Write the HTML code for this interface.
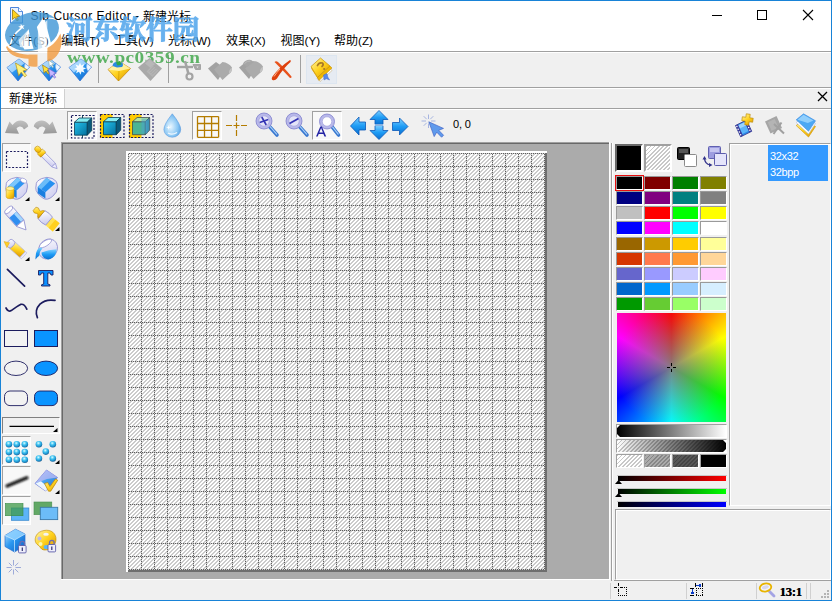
<!DOCTYPE html>
<html lang="zh"><head><meta charset="utf-8"><title>Sib Cursor Editor</title>
<style>
html,body{margin:0;padding:0;}
body{width:832px;height:601px;overflow:hidden;position:relative;background:#f0f0f0;font-family:"Liberation Sans",sans-serif;}
div,span.t,svg.a{position:absolute;box-sizing:border-box;}
span.t{white-space:nowrap;line-height:1.2;}
</style></head><body>
<div style="left:0px;top:0px;width:832px;height:601px;background:#1883d7"></div>
<div style="left:1px;top:1px;width:830px;height:599px;background:#f0f0f0"></div>
<div style="left:1px;top:1px;width:830px;height:50px;background:#fff"></div>
<div style="left:1px;top:51px;width:830px;height:1px;background:#a0a0a0"></div>
<div style="left:1px;top:52px;width:830px;height:1px;background:#fff"></div>
<span class="t" style="left:30.5px;top:9px;font-size:12px;color:#000;letter-spacing:0.55px">Sib Cursor Editor -</span>
<span class="t" style="left:33.0px;top:34px;font-size:11.7px;color:#000;">(S)</span>
<span class="t" style="left:85.0px;top:34px;font-size:11.7px;color:#000;">(T)</span>
<span class="t" style="left:138.0px;top:34px;font-size:11.7px;color:#000;">(V)</span>
<span class="t" style="left:192.0px;top:34px;font-size:11.7px;color:#000;">(W)</span>
<span class="t" style="left:250.0px;top:34px;font-size:11.7px;color:#000;">(X)</span>
<span class="t" style="left:304.5px;top:34px;font-size:11.7px;color:#000;">(Y)</span>
<span class="t" style="left:358.0px;top:34px;font-size:11.7px;color:#000;">(Z)</span>
<div style="left:1px;top:87px;width:830px;height:1px;background:#a0a0a0"></div>
<div style="left:1px;top:88px;width:830px;height:1px;background:#fff"></div>
<div style="left:1px;top:89px;width:64px;height:19px;background:#fff;border-right:1px solid #d0d0d0"></div>
<div style="left:1px;top:108px;width:830px;height:1px;background:#a0a0a0"></div>
<div style="left:1px;top:109px;width:830px;height:1px;background:#fff"></div>
<div style="left:61px;top:142px;width:548px;height:437px;background:#a0a0a0"></div>
<div style="left:62px;top:143px;width:547px;height:436px;background:#696969"></div>
<div style="left:63px;top:144px;width:546px;height:435px;background:#ababab"></div>
<div style="left:61px;top:579px;width:549px;height:1px;background:#fff"></div>
<div style="left:609px;top:142px;width:1px;height:438px;background:#fff"></div>
<div style="left:126px;top:151px;width:421px;height:421px;background:#fff"></div>
<div style="left:128px;top:153px;width:419px;height:419px;background:#6e6e6e"></div>
<div style="left:128px;top:153px;width:417px;height:417px;"><svg class="a" style="left:0;top:0" width="417" height="417" shape-rendering="crispEdges"><defs><pattern id="g" width="26" height="26" patternUnits="userSpaceOnUse"><rect width="26" height="26" fill="#fff"/><path fill="#cbcbcb" d="M3 1h1v1h-1zM4 1h1v1h-1zM7 1h1v1h-1zM8 1h1v1h-1zM11 1h1v1h-1zM12 1h1v1h-1zM15 1h1v1h-1zM16 1h1v1h-1zM19 1h1v1h-1zM20 1h1v1h-1zM23 1h1v1h-1zM24 1h1v1h-1zM2 2h1v1h-1zM3 2h1v1h-1zM6 2h1v1h-1zM7 2h1v1h-1zM10 2h1v1h-1zM11 2h1v1h-1zM14 2h1v1h-1zM15 2h1v1h-1zM18 2h1v1h-1zM19 2h1v1h-1zM22 2h1v1h-1zM23 2h1v1h-1zM1 3h1v1h-1zM2 3h1v1h-1zM5 3h1v1h-1zM6 3h1v1h-1zM9 3h1v1h-1zM10 3h1v1h-1zM14 3h1v1h-1zM17 3h1v1h-1zM18 3h1v1h-1zM21 3h1v1h-1zM22 3h1v1h-1zM25 3h1v1h-1zM1 4h1v1h-1zM4 4h1v1h-1zM5 4h1v1h-1zM8 4h1v1h-1zM9 4h1v1h-1zM12 4h1v1h-1zM16 4h1v1h-1zM17 4h1v1h-1zM20 4h1v1h-1zM21 4h1v1h-1zM24 4h1v1h-1zM25 4h1v1h-1zM3 5h1v1h-1zM4 5h1v1h-1zM7 5h1v1h-1zM8 5h1v1h-1zM11 5h1v1h-1zM12 5h1v1h-1zM15 5h1v1h-1zM16 5h1v1h-1zM19 5h1v1h-1zM20 5h1v1h-1zM23 5h1v1h-1zM24 5h1v1h-1zM2 6h1v1h-1zM3 6h1v1h-1zM6 6h1v1h-1zM7 6h1v1h-1zM10 6h1v1h-1zM11 6h1v1h-1zM14 6h1v1h-1zM15 6h1v1h-1zM18 6h1v1h-1zM19 6h1v1h-1zM22 6h1v1h-1zM23 6h1v1h-1zM1 7h1v1h-1zM2 7h1v1h-1zM5 7h1v1h-1zM6 7h1v1h-1zM9 7h1v1h-1zM10 7h1v1h-1zM14 7h1v1h-1zM17 7h1v1h-1zM18 7h1v1h-1zM21 7h1v1h-1zM22 7h1v1h-1zM25 7h1v1h-1zM1 8h1v1h-1zM4 8h1v1h-1zM5 8h1v1h-1zM8 8h1v1h-1zM9 8h1v1h-1zM12 8h1v1h-1zM16 8h1v1h-1zM17 8h1v1h-1zM20 8h1v1h-1zM21 8h1v1h-1zM24 8h1v1h-1zM25 8h1v1h-1zM3 9h1v1h-1zM4 9h1v1h-1zM7 9h1v1h-1zM8 9h1v1h-1zM11 9h1v1h-1zM12 9h1v1h-1zM15 9h1v1h-1zM16 9h1v1h-1zM19 9h1v1h-1zM20 9h1v1h-1zM23 9h1v1h-1zM24 9h1v1h-1zM2 10h1v1h-1zM3 10h1v1h-1zM6 10h1v1h-1zM7 10h1v1h-1zM10 10h1v1h-1zM11 10h1v1h-1zM14 10h1v1h-1zM15 10h1v1h-1zM18 10h1v1h-1zM19 10h1v1h-1zM22 10h1v1h-1zM23 10h1v1h-1zM1 11h1v1h-1zM2 11h1v1h-1zM5 11h1v1h-1zM6 11h1v1h-1zM9 11h1v1h-1zM10 11h1v1h-1zM14 11h1v1h-1zM17 11h1v1h-1zM18 11h1v1h-1zM21 11h1v1h-1zM22 11h1v1h-1zM25 11h1v1h-1zM1 12h1v1h-1zM4 12h1v1h-1zM5 12h1v1h-1zM8 12h1v1h-1zM9 12h1v1h-1zM12 12h1v1h-1zM16 12h1v1h-1zM17 12h1v1h-1zM20 12h1v1h-1zM21 12h1v1h-1zM24 12h1v1h-1zM25 12h1v1h-1zM2 14h1v1h-1zM3 14h1v1h-1zM6 14h1v1h-1zM7 14h1v1h-1zM10 14h1v1h-1zM11 14h1v1h-1zM14 14h1v1h-1zM15 14h1v1h-1zM18 14h1v1h-1zM19 14h1v1h-1zM22 14h1v1h-1zM23 14h1v1h-1zM1 15h1v1h-1zM2 15h1v1h-1zM5 15h1v1h-1zM6 15h1v1h-1zM9 15h1v1h-1zM10 15h1v1h-1zM14 15h1v1h-1zM17 15h1v1h-1zM18 15h1v1h-1zM21 15h1v1h-1zM22 15h1v1h-1zM25 15h1v1h-1zM1 16h1v1h-1zM4 16h1v1h-1zM5 16h1v1h-1zM8 16h1v1h-1zM9 16h1v1h-1zM12 16h1v1h-1zM16 16h1v1h-1zM17 16h1v1h-1zM20 16h1v1h-1zM21 16h1v1h-1zM24 16h1v1h-1zM25 16h1v1h-1zM3 17h1v1h-1zM4 17h1v1h-1zM7 17h1v1h-1zM8 17h1v1h-1zM11 17h1v1h-1zM12 17h1v1h-1zM15 17h1v1h-1zM16 17h1v1h-1zM19 17h1v1h-1zM20 17h1v1h-1zM23 17h1v1h-1zM24 17h1v1h-1zM2 18h1v1h-1zM3 18h1v1h-1zM6 18h1v1h-1zM7 18h1v1h-1zM10 18h1v1h-1zM11 18h1v1h-1zM14 18h1v1h-1zM15 18h1v1h-1zM18 18h1v1h-1zM19 18h1v1h-1zM22 18h1v1h-1zM23 18h1v1h-1zM1 19h1v1h-1zM2 19h1v1h-1zM5 19h1v1h-1zM6 19h1v1h-1zM9 19h1v1h-1zM10 19h1v1h-1zM14 19h1v1h-1zM17 19h1v1h-1zM18 19h1v1h-1zM21 19h1v1h-1zM22 19h1v1h-1zM25 19h1v1h-1zM1 20h1v1h-1zM4 20h1v1h-1zM5 20h1v1h-1zM8 20h1v1h-1zM9 20h1v1h-1zM12 20h1v1h-1zM16 20h1v1h-1zM17 20h1v1h-1zM20 20h1v1h-1zM21 20h1v1h-1zM24 20h1v1h-1zM25 20h1v1h-1zM3 21h1v1h-1zM4 21h1v1h-1zM7 21h1v1h-1zM8 21h1v1h-1zM11 21h1v1h-1zM12 21h1v1h-1zM15 21h1v1h-1zM16 21h1v1h-1zM19 21h1v1h-1zM20 21h1v1h-1zM23 21h1v1h-1zM24 21h1v1h-1zM2 22h1v1h-1zM3 22h1v1h-1zM6 22h1v1h-1zM7 22h1v1h-1zM10 22h1v1h-1zM11 22h1v1h-1zM14 22h1v1h-1zM15 22h1v1h-1zM18 22h1v1h-1zM19 22h1v1h-1zM22 22h1v1h-1zM23 22h1v1h-1zM1 23h1v1h-1zM2 23h1v1h-1zM5 23h1v1h-1zM6 23h1v1h-1zM9 23h1v1h-1zM10 23h1v1h-1zM14 23h1v1h-1zM17 23h1v1h-1zM18 23h1v1h-1zM21 23h1v1h-1zM22 23h1v1h-1zM25 23h1v1h-1zM1 24h1v1h-1zM4 24h1v1h-1zM5 24h1v1h-1zM8 24h1v1h-1zM9 24h1v1h-1zM12 24h1v1h-1zM16 24h1v1h-1zM17 24h1v1h-1zM20 24h1v1h-1zM21 24h1v1h-1zM24 24h1v1h-1zM25 24h1v1h-1zM3 25h1v1h-1zM4 25h1v1h-1zM7 25h1v1h-1zM8 25h1v1h-1zM11 25h1v1h-1zM12 25h1v1h-1zM15 25h1v1h-1zM16 25h1v1h-1zM19 25h1v1h-1zM20 25h1v1h-1zM23 25h1v1h-1zM24 25h1v1h-1z"/><path fill="#cfcfcf" d="M0 0h1v1h-1zM2 0h1v1h-1zM4 0h1v1h-1zM6 0h1v1h-1zM8 0h1v1h-1zM10 0h1v1h-1zM12 0h1v1h-1zM14 0h1v1h-1zM16 0h1v1h-1zM18 0h1v1h-1zM20 0h1v1h-1zM22 0h1v1h-1zM24 0h1v1h-1zM13 1h1v1h-1zM0 2h1v1h-1zM13 3h1v1h-1zM0 4h1v1h-1zM13 5h1v1h-1zM0 6h1v1h-1zM13 7h1v1h-1zM0 8h1v1h-1zM13 9h1v1h-1zM0 10h1v1h-1zM13 11h1v1h-1zM0 12h1v1h-1zM1 13h1v1h-1zM3 13h1v1h-1zM5 13h1v1h-1zM7 13h1v1h-1zM9 13h1v1h-1zM11 13h1v1h-1zM13 13h1v1h-1zM15 13h1v1h-1zM17 13h1v1h-1zM19 13h1v1h-1zM21 13h1v1h-1zM23 13h1v1h-1zM25 13h1v1h-1zM0 14h1v1h-1zM13 15h1v1h-1zM0 16h1v1h-1zM13 17h1v1h-1zM0 18h1v1h-1zM13 19h1v1h-1zM0 20h1v1h-1zM13 21h1v1h-1zM0 22h1v1h-1zM13 23h1v1h-1zM0 24h1v1h-1zM13 25h1v1h-1z"/><path fill="#5e5e5e" d="M1 0h1v1h-1zM3 0h1v1h-1zM5 0h1v1h-1zM7 0h1v1h-1zM9 0h1v1h-1zM11 0h1v1h-1zM13 0h1v1h-1zM15 0h1v1h-1zM17 0h1v1h-1zM19 0h1v1h-1zM21 0h1v1h-1zM23 0h1v1h-1zM25 0h1v1h-1zM0 1h1v1h-1zM13 2h1v1h-1zM0 3h1v1h-1zM13 4h1v1h-1zM0 5h1v1h-1zM13 6h1v1h-1zM0 7h1v1h-1zM13 8h1v1h-1zM0 9h1v1h-1zM13 10h1v1h-1zM0 11h1v1h-1zM13 12h1v1h-1zM0 13h1v1h-1zM2 13h1v1h-1zM4 13h1v1h-1zM6 13h1v1h-1zM8 13h1v1h-1zM10 13h1v1h-1zM12 13h1v1h-1zM14 13h1v1h-1zM16 13h1v1h-1zM18 13h1v1h-1zM20 13h1v1h-1zM22 13h1v1h-1zM24 13h1v1h-1zM13 14h1v1h-1zM0 15h1v1h-1zM13 16h1v1h-1zM0 17h1v1h-1zM13 18h1v1h-1zM0 19h1v1h-1zM13 20h1v1h-1zM0 21h1v1h-1zM13 22h1v1h-1zM0 23h1v1h-1zM13 24h1v1h-1zM0 25h1v1h-1z"/></pattern></defs><rect width="417" height="417" fill="url(#g)"/></svg></div>
<div style="left:611px;top:143px;width:1px;height:438px;background:#a0a0a0"></div>
<div style="left:612px;top:143px;width:1px;height:437px;background:#fff"></div>
<div style="left:615px;top:144px;width:28px;height:28px;background:#000;border:2px solid;border-color:#696969 #fff #fff #696969"></div>
<div style="left:644px;top:144px;width:28px;height:28px;background:repeating-linear-gradient(135deg,#c8c8c8 0,#c8c8c8 1.41px,#fff 1.41px,#fff 2.83px);border:2px solid;border-color:#a0a0a0 #fff #fff #a0a0a0"></div>
<div style="left:616px;top:176px;width:27px;height:14px;background:#000000;border:1px solid;border-color:#9a9a9a #fff #fff #9a9a9a"></div>
<div style="left:644px;top:176px;width:27px;height:14px;background:#800000;border:1px solid;border-color:#9a9a9a #fff #fff #9a9a9a"></div>
<div style="left:672px;top:176px;width:27px;height:14px;background:#008000;border:1px solid;border-color:#9a9a9a #fff #fff #9a9a9a"></div>
<div style="left:700px;top:176px;width:27px;height:14px;background:#808000;border:1px solid;border-color:#9a9a9a #fff #fff #9a9a9a"></div>
<div style="left:616px;top:191px;width:27px;height:14px;background:#000080;border:1px solid;border-color:#9a9a9a #fff #fff #9a9a9a"></div>
<div style="left:644px;top:191px;width:27px;height:14px;background:#800080;border:1px solid;border-color:#9a9a9a #fff #fff #9a9a9a"></div>
<div style="left:672px;top:191px;width:27px;height:14px;background:#008080;border:1px solid;border-color:#9a9a9a #fff #fff #9a9a9a"></div>
<div style="left:700px;top:191px;width:27px;height:14px;background:#808080;border:1px solid;border-color:#9a9a9a #fff #fff #9a9a9a"></div>
<div style="left:616px;top:206px;width:27px;height:14px;background:#c0c0c0;border:1px solid;border-color:#9a9a9a #fff #fff #9a9a9a"></div>
<div style="left:644px;top:206px;width:27px;height:14px;background:#ff0000;border:1px solid;border-color:#9a9a9a #fff #fff #9a9a9a"></div>
<div style="left:672px;top:206px;width:27px;height:14px;background:#00ff00;border:1px solid;border-color:#9a9a9a #fff #fff #9a9a9a"></div>
<div style="left:700px;top:206px;width:27px;height:14px;background:#ffff00;border:1px solid;border-color:#9a9a9a #fff #fff #9a9a9a"></div>
<div style="left:616px;top:221px;width:27px;height:14px;background:#0000ff;border:1px solid;border-color:#9a9a9a #fff #fff #9a9a9a"></div>
<div style="left:644px;top:221px;width:27px;height:14px;background:#ff00ff;border:1px solid;border-color:#9a9a9a #fff #fff #9a9a9a"></div>
<div style="left:672px;top:221px;width:27px;height:14px;background:#00ffff;border:1px solid;border-color:#9a9a9a #fff #fff #9a9a9a"></div>
<div style="left:700px;top:221px;width:27px;height:14px;background:#ffffff;border:1px solid;border-color:#9a9a9a #fff #fff #9a9a9a"></div>
<div style="left:616px;top:237px;width:27px;height:14px;background:#996600;border:1px solid;border-color:#9a9a9a #fff #fff #9a9a9a"></div>
<div style="left:644px;top:237px;width:27px;height:14px;background:#cc9900;border:1px solid;border-color:#9a9a9a #fff #fff #9a9a9a"></div>
<div style="left:672px;top:237px;width:27px;height:14px;background:#ffcc00;border:1px solid;border-color:#9a9a9a #fff #fff #9a9a9a"></div>
<div style="left:700px;top:237px;width:27px;height:14px;background:#ffff99;border:1px solid;border-color:#9a9a9a #fff #fff #9a9a9a"></div>
<div style="left:616px;top:252px;width:27px;height:14px;background:#d63600;border:1px solid;border-color:#9a9a9a #fff #fff #9a9a9a"></div>
<div style="left:644px;top:252px;width:27px;height:14px;background:#ff794d;border:1px solid;border-color:#9a9a9a #fff #fff #9a9a9a"></div>
<div style="left:672px;top:252px;width:27px;height:14px;background:#ff9933;border:1px solid;border-color:#9a9a9a #fff #fff #9a9a9a"></div>
<div style="left:700px;top:252px;width:27px;height:14px;background:#ffd699;border:1px solid;border-color:#9a9a9a #fff #fff #9a9a9a"></div>
<div style="left:616px;top:267px;width:27px;height:14px;background:#6666cc;border:1px solid;border-color:#9a9a9a #fff #fff #9a9a9a"></div>
<div style="left:644px;top:267px;width:27px;height:14px;background:#9999ff;border:1px solid;border-color:#9a9a9a #fff #fff #9a9a9a"></div>
<div style="left:672px;top:267px;width:27px;height:14px;background:#ccccff;border:1px solid;border-color:#9a9a9a #fff #fff #9a9a9a"></div>
<div style="left:700px;top:267px;width:27px;height:14px;background:#ffccff;border:1px solid;border-color:#9a9a9a #fff #fff #9a9a9a"></div>
<div style="left:616px;top:282px;width:27px;height:14px;background:#0066cc;border:1px solid;border-color:#9a9a9a #fff #fff #9a9a9a"></div>
<div style="left:644px;top:282px;width:27px;height:14px;background:#0099ff;border:1px solid;border-color:#9a9a9a #fff #fff #9a9a9a"></div>
<div style="left:672px;top:282px;width:27px;height:14px;background:#99ccff;border:1px solid;border-color:#9a9a9a #fff #fff #9a9a9a"></div>
<div style="left:700px;top:282px;width:27px;height:14px;background:#d6eeff;border:1px solid;border-color:#9a9a9a #fff #fff #9a9a9a"></div>
<div style="left:616px;top:297px;width:27px;height:14px;background:#009900;border:1px solid;border-color:#9a9a9a #fff #fff #9a9a9a"></div>
<div style="left:644px;top:297px;width:27px;height:14px;background:#66cc33;border:1px solid;border-color:#9a9a9a #fff #fff #9a9a9a"></div>
<div style="left:672px;top:297px;width:27px;height:14px;background:#99ff66;border:1px solid;border-color:#9a9a9a #fff #fff #9a9a9a"></div>
<div style="left:700px;top:297px;width:27px;height:14px;background:#ccffcc;border:1px solid;border-color:#9a9a9a #fff #fff #9a9a9a"></div>
<div style="left:615px;top:175px;width:29px;height:16px;border:1px solid #e81010"></div>
<div style="left:617px;top:313px;width:109px;height:109px;background:radial-gradient(circle at 54.5px 54.5px,rgba(128,128,128,.96) 0,rgba(128,128,128,0) 58px),conic-gradient(from 0deg at 54.5px 54.5px,#f00,#ff0 60deg,#0f0 120deg,#0ff 180deg,#00f 240deg,#f0f 300deg,#f00)"></div>
<div style="left:616px;top:424px;width:111px;height:14px;background:linear-gradient(90deg,#000,#fff);border:1px solid;border-color:#a0a0a0 #fff #fff #a0a0a0"></div>
<div style="left:616px;top:439px;width:111px;height:14px;background:linear-gradient(90deg,rgba(0,0,0,0),#000),repeating-linear-gradient(135deg,#c8c8c8 0,#c8c8c8 1.41px,#fff 1.41px,#fff 2.83px);border:1px solid;border-color:#a0a0a0 #fff #fff #a0a0a0"></div>
<div style="left:616px;top:454px;width:27px;height:14px;background:linear-gradient(rgba(0,0,0,0),rgba(0,0,0,0)),repeating-linear-gradient(135deg,#c8c8c8 0,#c8c8c8 1.41px,#fff 1.41px,#fff 2.83px);border:1px solid;border-color:#a0a0a0 #fff #fff #a0a0a0"></div>
<div style="left:644px;top:454px;width:27px;height:14px;background:linear-gradient(rgba(0,0,0,0.33),rgba(0,0,0,0.33)),repeating-linear-gradient(135deg,#c8c8c8 0,#c8c8c8 1.41px,#fff 1.41px,#fff 2.83px);border:1px solid;border-color:#a0a0a0 #fff #fff #a0a0a0"></div>
<div style="left:672px;top:454px;width:27px;height:14px;background:linear-gradient(rgba(0,0,0,0.66),rgba(0,0,0,0.66)),repeating-linear-gradient(135deg,#c8c8c8 0,#c8c8c8 1.41px,#fff 1.41px,#fff 2.83px);border:1px solid;border-color:#a0a0a0 #fff #fff #a0a0a0"></div>
<div style="left:700px;top:454px;width:27px;height:14px;background:linear-gradient(rgba(0,0,0,1),rgba(0,0,0,1)),repeating-linear-gradient(135deg,#c8c8c8 0,#c8c8c8 1.41px,#fff 1.41px,#fff 2.83px);border:1px solid;border-color:#a0a0a0 #fff #fff #a0a0a0"></div>
<div style="left:618px;top:476px;width:108px;height:5px;background:linear-gradient(90deg,#000,#f00)"></div>
<div style="left:617px;top:475px;width:110px;height:1px;background:#c8c8c8"></div>
<div style="left:618px;top:489px;width:108px;height:5px;background:linear-gradient(90deg,#000,#0f0)"></div>
<div style="left:617px;top:488px;width:110px;height:1px;background:#c8c8c8"></div>
<div style="left:618px;top:502px;width:108px;height:5px;background:linear-gradient(90deg,#000,#00f)"></div>
<div style="left:617px;top:501px;width:110px;height:1px;background:#c8c8c8"></div>
<div style="left:729px;top:143px;width:102px;height:363px;background:#f0f0f0;border:1px solid;border-color:#a0a0a0 #fff #fff #a0a0a0"></div>
<div style="left:730px;top:144px;width:1px;height:361px;background:#fff"></div>
<div style="left:730px;top:144px;width:100px;height:1px;background:#fff"></div>
<div style="left:768px;top:145px;width:60px;height:36px;background:#3399ff"></div>
<span class="t" style="left:770px;top:150px;font-size:11px;color:#fff;letter-spacing:-0.35px">32x32</span>
<span class="t" style="left:770px;top:166px;font-size:11px;color:#fff;letter-spacing:-0.35px">32bpp</span>
<div style="left:615px;top:509px;width:216px;height:71px;background:#f0f0f0;border:1px solid;border-color:#a0a0a0 #fff #fff #a0a0a0"></div>
<div style="left:616px;top:510px;width:214px;height:69px;border:1px solid;border-color:#fff #f0f0f0 #f0f0f0 #fff"></div>
<div style="left:614px;top:580px;width:217px;height:1px;background:#a0a0a0"></div>
<div style="left:610px;top:583px;width:1px;height:16px;background:#d0d0d0"></div>
<div style="left:686px;top:583px;width:1px;height:16px;background:#d0d0d0"></div>
<div style="left:756px;top:583px;width:1px;height:16px;background:#d0d0d0"></div>
<div style="left:806px;top:583px;width:1px;height:16px;background:#d0d0d0"></div>
<div style="left:810px;top:583px;width:1px;height:16px;background:#d0d0d0"></div>
<span class="t" style="left:779.5px;top:584.6px;font-size:12.5px;font-weight:bold;font-family:'Liberation Serif',serif;letter-spacing:-.15px;text-shadow:.4px 0 0 #000">13:1</span>
<div style="left:827px;top:590px;width:2px;height:2px;background:#b4b4b4"></div>
<div style="left:824px;top:593px;width:2px;height:2px;background:#b4b4b4"></div>
<div style="left:827px;top:593px;width:2px;height:2px;background:#b4b4b4"></div>
<div style="left:821px;top:596px;width:2px;height:2px;background:#b4b4b4"></div>
<div style="left:824px;top:596px;width:2px;height:2px;background:#b4b4b4"></div>
<div style="left:827px;top:596px;width:2px;height:2px;background:#b4b4b4"></div>
<div style="left:98px;top:55px;width:1px;height:28px;background:#a0a0a0"></div>
<div style="left:168px;top:55px;width:1px;height:28px;background:#a0a0a0"></div>
<div style="left:300px;top:55px;width:1px;height:28px;background:#a0a0a0"></div>
<div style="left:306px;top:55px;width:31px;height:29px;background:#e6ebf2;border:1px solid #dde6f0"></div>
<div style="left:67px;top:111px;width:30px;height:29px;background:#f8f8f8;border:1px solid;border-color:#a0a0a0 #fff #fff #a0a0a0"></div>
<div style="left:192px;top:111px;width:30px;height:29px;background:#f8f8f8;border:1px solid;border-color:#a0a0a0 #fff #fff #a0a0a0"></div>
<div style="left:312px;top:111px;width:30px;height:29px;background:#f8f8f8;border:1px solid;border-color:#a0a0a0 #fff #fff #a0a0a0"></div>
<span class="t" style="left:453px;top:118px;font-size:11px;color:#000;letter-spacing:-.2px">0, 0</span>
<div style="left:2px;top:143px;width:29px;height:29px;background:#f8f8f8;border:1px solid;border-color:#a0a0a0 #fff #fff #a0a0a0"></div>
<div style="left:2px;top:417px;width:58px;height:17px;background:#f0f0f0;border:1px solid;border-color:#808080 #fff #fff #808080"></div>
<div style="left:2px;top:436px;width:29px;height:29px;background:#f8f8f8;border:1px solid;border-color:#a0a0a0 #fff #fff #a0a0a0"></div>
<div style="left:2px;top:466px;width:29px;height:29px;background:#f8f8f8;border:1px solid;border-color:#a0a0a0 #fff #fff #a0a0a0"></div>
<div style="left:2px;top:496px;width:29px;height:29px;background:#f8f8f8;border:1px solid;border-color:#a0a0a0 #fff #fff #a0a0a0"></div>
<span class="t" style="left:67px;top:48.3px;font-size:16.5px;font-weight:bold;font-family:'Liberation Serif',serif;color:#3fa648;opacity:.82;letter-spacing:.4px;transform-origin:0 0;transform:scaleX(1.168)">www.pc0359.cn</span>
<svg class="a" style="left:0;top:0" width="832" height="601" viewBox="0 0 832 601">
<path d="M10.5 7.5h8l4 4v11.5h-12z" fill="#eaf4ff" stroke="#3a78d8" stroke-width=".9"/><path d="M18.5 7.5v4h4" fill="#fff" stroke="#3a78d8" stroke-width=".8"/><path d="M12.500 9.500v10l2.600-2.200 1.800 3.600 1.600-.8-1.800-3.500 3.300-.2z" fill="#ffd21e" stroke="#8a6a00" stroke-width=".7"/>
<text x="143" y="20.900" font-size="12" fill="#000" font-family="'Liberation Sans','Noto Sans CJK SC',sans-serif">新建光标</text>
<path d="M712 15.5h10" stroke="#000" fill="none"/>
<rect x="757.5" y="10.5" width="9" height="9" stroke="#000" fill="none"/>
<path d="M803 10l10 10M813 10l-10 10" stroke="#000" stroke-width="1.1" fill="none"/>
<text x="9" y="45.400" font-size="12" fill="#000" font-family="'Liberation Sans','Noto Sans CJK SC',sans-serif">文件</text>
<text x="61" y="45.400" font-size="12" fill="#000" font-family="'Liberation Sans','Noto Sans CJK SC',sans-serif">编辑</text>
<text x="114" y="45.400" font-size="12" fill="#000" font-family="'Liberation Sans','Noto Sans CJK SC',sans-serif">工具</text>
<text x="168" y="45.400" font-size="12" fill="#000" font-family="'Liberation Sans','Noto Sans CJK SC',sans-serif">光标</text>
<text x="226" y="45.400" font-size="12" fill="#000" font-family="'Liberation Sans','Noto Sans CJK SC',sans-serif">效果</text>
<text x="280.500" y="45.400" font-size="12" fill="#000" font-family="'Liberation Sans','Noto Sans CJK SC',sans-serif">视图</text>
<text x="334" y="45.400" font-size="12" fill="#000" font-family="'Liberation Sans','Noto Sans CJK SC',sans-serif">帮助</text>
<text x="9" y="103.400" font-size="12" fill="#000" font-family="'Liberation Sans','Noto Sans CJK SC',sans-serif">新建光标</text>
<path d="M818 92l9 9M827 92l-9 9" stroke="#000" stroke-width="1.3" fill="none"/>
<rect x="677.5" y="147.5" width="12" height="12" rx="1" fill="#222" stroke="#000"/><path d="M679 149h9v4h-9z" fill="#555"/><rect x="684.5" y="154.5" width="12" height="12" rx="1" fill="#fff" stroke="#8a8a8a"/>
<rect x="708.5" y="146.5" width="12" height="12" rx="1" fill="#9c9ce0" stroke="#6060b0"/><path d="M710 148h9v4h-9z" fill="#c4c4f0"/><rect x="714.5" y="153.5" width="12" height="12" rx="1" fill="#e4e4fa" stroke="#5c5cac"/><path d="M704.5 158q0 6 6 7" fill="none" stroke="#34348c" stroke-width="1.2"/><path d="M702.5 159.5l2-3.5 2 3.5zM709 163l3.5 2-3.5 2z" fill="#34348c"/>
<path d="M671.5 363v3M671.5 369v3M667 367.5h3M673 367.5h3" stroke="#000" fill="none"/>
<path d="M617 425h3l-3 3zM617 437h3l-3-3z" fill="#fff"/>
<path d="M726 440h-3l3 3zM726 452h-3l3-3z" fill="#fff"/>
<path d="M615 484l3.5-4 3.5 4z" fill="#000"/>
<path d="M615 497l3.5-4 3.5 4z" fill="#000"/>
<path shape-rendering="crispEdges" fill="#000" d="M614 587h3v1h-3zM620 587h3v1h-3zM624 587h1v1h-1zM626 587h1v1h-1zM618 583h1v3h-1zM618 589h1v3h-1zM618 593h1v1h-1zM618 595h1v1h-1zM626 589h1v1h-1zM626 591h1v1h-1zM626 593h1v1h-1zM626 595h1v1h-1zM620 595h1v1h-1zM622 595h1v1h-1zM624 595h1v1h-1z"/>
<path shape-rendering="crispEdges" fill="#999" d="M618 587h1v1h-1z"/>
<path shape-rendering="crispEdges" fill="#000" d="M696 588h1v1h-1zM698 588h1v1h-1zM700 588h1v1h-1zM702 588h1v1h-1zM696 595h1v1h-1zM698 595h1v1h-1zM700 595h1v1h-1zM702 595h1v1h-1zM696 590h1v1h-1zM696 592h1v1h-1zM696 594h1v1h-1zM702 590h1v1h-1zM702 592h1v1h-1zM702 594h1v1h-1zM695 583h1v4h-1zM702 583h1v4h-1zM690 588h4v1h-4zM690 595h4v1h-4z"/>
<path shape-rendering="crispEdges" fill="#0a3cc8" d="M696 585h5v1h-5zM699 584h1v3h-1zM700 584h1v3h-1zM692 589h1v5h-1zM691 592h3v1h-3zM691 593h3v1h-3z"/>
<path d="M769.5 591.5l4.5 4.5" stroke="#a4a4e4" stroke-width="2.8" stroke-linecap="round"/><ellipse cx="765.5" cy="587.5" rx="5.8" ry="4" fill="#f4f4f8" stroke="#e8b400" stroke-width="1.8" transform="rotate(-12 765.5 587.5)"/><ellipse cx="765.5" cy="587.2" rx="3.5" ry="1.8" fill="#d8d8ec" transform="rotate(-12 765.5 587.5)"/>
<g transform="translate(6,58)"><path d="M1 9.5L13 1 23.5 9 12 23z" fill="url(#gb2)" stroke="#2a6ad0" stroke-width=".7"/><path d="M1 9.5L13 1 18.5 5.2 6 14.5z" fill="#bfe2ff" opacity=".75"/><path d="M19 5.5l4.5 3.5-3.5 4.2q-2.5-3.5-1-7.7z" fill="#eef6ff" stroke="#7aa8e8" stroke-width=".5"/><path transform="translate(9.5,5) rotate(-14) scale(1.25)" d="M0 0l0 10.5 2.6-2.2 1.9 4.3 1.7-.8-1.9-4.2 3.4-.1z" fill="#fff27a" stroke="#b08c10" stroke-width="0.48"/></g>
<g transform="translate(37,58)"><path d="M1 9.5L13 1 23.5 9 12 23z" fill="url(#gb2)" stroke="#2a6ad0" stroke-width=".7"/><path d="M1 9.5L13 1 18.5 5.2 6 14.5z" fill="#bfe2ff" opacity=".75"/><path d="M19 5.5l4.5 3.5-3.5 4.2q-2.5-3.5-1-7.7z" fill="#eef6ff" stroke="#7aa8e8" stroke-width=".5"/><path transform="translate(5.5,7) rotate(-12) scale(0.8)" d="M0 0l0 10.5 2.6-2.2 1.9 4.3 1.7-.8-1.9-4.2 3.4-.1z" fill="#ffe03c" stroke="#a07800" stroke-width="0.75"/><path transform="translate(11.5,2) rotate(-8) scale(0.65)" d="M0 0l0 10.5 2.6-2.2 1.9 4.3 1.7-.8-1.9-4.2 3.4-.1z" fill="#fff" stroke="#8aa" stroke-width="0.92"/><path transform="translate(11.5,10.5) rotate(-12) scale(0.85)" d="M0 0l0 10.5 2.6-2.2 1.9 4.3 1.7-.8-1.9-4.2 3.4-.1z" fill="#c8b8ff" stroke="#7a6ad0" stroke-width="0.71"/></g>
<g transform="translate(68,58)"><path d="M1 9.5L13 1 23.5 9 12 23z" fill="url(#gb2)" stroke="#2a6ad0" stroke-width=".7"/><path d="M1 9.5L13 1 18.5 5.2 6 14.5z" fill="#bfe2ff" opacity=".75"/><path d="M19 5.5l4.5 3.5-3.5 4.2q-2.5-3.5-1-7.7z" fill="#eef6ff" stroke="#7aa8e8" stroke-width=".5"/><path d="M12 4.5l1.2 3 3-1.5-1.2 3.2 3.2 1-3 1.5 1.5 3-3.2-1.2-1 3.2-1.5-3-3 1.5 1.2-3.2-3.2-1 3-1.5-1.5-3 3.2 1.2z" fill="#fff" opacity=".95"/></g>
<g transform="translate(107,58)"><path d="M1 11.5L12.5 3.5 23.5 10.5 11.5 23z" fill="url(#gy)" stroke="#c08000" stroke-width=".7"/><path d="M1 11.5L12.5 3.5 23.5 10.5 12 13z" fill="#fff6b8" opacity=".8"/><path d="M12 13l-.5 10" stroke="#c89000" stroke-width=".6"/><path d="M5.5 8q.5-4.5 5-4l4.5 .5q2 2.5 0 4.5l-5 .5z" fill="#2a8ae0"/><path d="M9 4.5l4-1.5 1.5 3.5-4 1z" fill="#30a848"/></g>
<g transform="translate(137,57)"><path d="M1 10.5L12.5 1 25 11.5 13.5 24z" fill="#a9a9a9"/><path d="M8 6.5l4.5-4 5.5 4.5-4.5 4z" fill="#b8b8b8"/><path d="M9.5 14.5l6-6 6 5-6 6.5z" fill="#b4b4b4"/><path d="M12 14.5l5-5M13.5 16l5-5M15 17.5l5-5" stroke="#a0a0a0" stroke-width=".7"/></g>
<g transform="translate(177,59)" fill="none" stroke="#a4a4a4"><path d="M0 8h16" stroke-width="2.4"/><path d="M16 5.5h7.5v5h-5z" fill="#a8a8a8" stroke-width="1"/><path d="M19.5 7.5l1 1.5 1-1.5z" fill="#f0f0f0" stroke="none"/><path d="M8 2l3.5 13" stroke-width="2.6"/><circle cx="12.5" cy="17.5" r="3" stroke-width="2.2"/></g>
<g transform="translate(208,59)"><path d="M0 9.5L8 3l9 6.5L10 21z" fill="#a2a2a2"/><path d="M6 10.5L14.5 3q6 .5 9.5 5.5 0 5-3 6.5l-6.5 6z" fill="#ababab"/><path d="M21 14.5q-.5-3.5 3-6 0 5-3 6z" fill="#c4c4c4"/></g>
<g transform="translate(239,58)"><path d="M0 9.5L8 3l9 6.5L10 21z" fill="#a2a2a2"/><path d="M6 10.5L14.5 3q6 .5 9.5 5.5 0 5-3 6.5l-6.5 6z" fill="#ababab"/><path d="M21 14.5q-.5-3.5 3-6 0 5-3 6z" fill="#c4c4c4"/><path d="M4 5.5q3-4.5 8-3.5l3 2-7 5z" fill="#a6a6a6"/><path d="M5.5 5.5q2.5-3 6-2.5" stroke="#c0c0c0" stroke-width=".8" fill="none"/></g>
<g transform="translate(271,59)"><path d="M3.5 3q1.5-1.5 3.5 0 6 5.5 13.5 14.5 .5 1.5-1.5 1.5-7.5-8-15.5-16z" fill="#e8521c"/><path d="M19 1q1.5 .5 .5 2-7.5 6.5-13.5 16.5-2 2.5-4.5 1.5-1.5-1 0-3.5 6.5-9 17.5-16.5z" fill="#de400c"/><path d="M3 17.5q3-4.500 6-7.500" stroke="#ffb488" stroke-width="1" fill="none"/></g>
<g transform="translate(310,57)"><path d="M7 21.5L19.5 11l2.5 2.5L10 24.5z" fill="#fff" stroke="#c0a060" stroke-width=".5"/><path d="M1 9.5L10.5 1 20 9 7.5 20.5z" fill="url(#gy)" stroke="#c89000" stroke-width=".7"/><path d="M1 9.5l6.5 11L9 23.5 1.5 12z" fill="#e0a000"/><path d="M7.5 20.5L20 9l2 2L9 23.5z" fill="#f0b800" stroke="#c08800" stroke-width=".5"/><path d="M7.5 8.5q1.5-3.5 5-2.5 1.5 1.5-.5 3.5" fill="none" stroke="#a87828" stroke-width="1.7" stroke-linecap="round"/><circle cx="14.2" cy="12" r="1.1" fill="#a87828"/><path d="M13.5 18l3.5-1.5 .8 3.5 1.8 3-3.2-1.2-2.400 1.2z" fill="#5a8ae8" stroke="#3a5ac8" stroke-width=".4"/></g>
<path transform="translate(5,120)" d="M0 13L4.5 1.5 7.5 5Q13-1.5 19.5 1.5 23 3.5 23.2 6.5L19 9.5Q17.5 6 14.5 6.5 12.5 7 11.5 8.5L14 13.8z" fill="url(#gg)"/>
<path transform="translate(57,120) scale(-1,1)" d="M0 13L4.5 1.5 7.5 5Q13-1.5 19.5 1.5 23 3.5 23.2 6.5L19 9.5Q17.5 6 14.5 6.5 12.5 7 11.5 8.5L14 13.8z" fill="url(#gg)"/>
<rect x="71.5" y="115.5" width="22.5" height="22.5" fill="none" stroke="#1c1c5e" stroke-width="1.2" stroke-dasharray="2 1.5"/>
<path d="M82.5 115v3M82.5 135v3" stroke="#083c54" stroke-width=".9"/>
<g transform="translate(74.5,118)" opacity="1" stroke="#083c54" stroke-width=".8" stroke-linejoin="round"><path d="M0 4.2h12.8v13h-12.8z" fill="url(#gcube)"/><path d="M0 4.2l4.6-4.2h12.6l-4.400 4.2z" fill="#86ecf2"/><path d="M12.8 4.2l4.400-4.2v12.6l-4.400 4.6z" fill="#0a5a7c"/></g>
<rect x="100" y="114" width="12.5" height="24" fill="#ffcc00"/>
<rect x="100.5" y="114.5" width="23.5" height="23" fill="none" stroke="#1c1c5e" stroke-width="1.2" stroke-dasharray="2 1.5"/>
<g transform="translate(103.5,117.5)" opacity="1" stroke="#083c54" stroke-width=".8" stroke-linejoin="round"><path d="M0 4.2h12.8v13h-12.8z" fill="url(#gcube)"/><path d="M0 4.2l4.6-4.2h12.6l-4.400 4.2z" fill="#86ecf2"/><path d="M12.8 4.2l4.400-4.2v12.6l-4.400 4.6z" fill="#0a5a7c"/></g>
<rect x="129" y="114" width="12.5" height="24" fill="#ffcc00"/>
<rect x="129.5" y="114.5" width="23.5" height="23" fill="none" stroke="#1c1c5e" stroke-width="1.2" stroke-dasharray="2 1.5"/>
<g transform="translate(132.5,117.5)" opacity="1" stroke="#3c4c54" stroke-width=".8" stroke-linejoin="round"><path d="M0 4.2h12.8v13h-12.8z" fill="#4cb494"/><path d="M0 4.2l4.6-4.2h12.6l-4.400 4.2z" fill="#b4e49c"/><path d="M12.8 4.2l4.400-4.2v12.6l-4.400 4.6z" fill="#3c94b4"/></g>
<path d="M141.5 118.5h6v15h-6z" fill="#48a4cc" opacity=".55"/>
<path d="M172.300 113.800q8.400 10.5 8.400 15.700a8.400 7.700 0 0 1-16.800 0q0-5.2 8.400-15.700z" fill="url(#gdrop)" stroke="#5c9ce0" stroke-width=".6"/><path d="M166 127.5l2-.5 .5-2 .5 2 2 .5-2 .5-.5 2-.5-2z" fill="#fff"/><path d="M168 133q4 2.5 9-.5" stroke="#f0f8ff" stroke-width="1.2" fill="none"/>
<g stroke="#b47c00" stroke-width="1.3" fill="none"><path d="M197.5 116.600v20.700M204.5 116.600v20.700M211.600 116.600v20.700M218.600 116.600v20.700M197.5 116.600h21.100M197.5 123.5h21.100M197.5 130.400h21.100M197.5 137.300h21.100"/></g>
<g stroke="#b47c00" stroke-width="1.2" fill="none"><path d="M226 125.5h6M233.5 125.5h6M241 125.5h6M236.5 115v6M236.5 122.5v6M236.5 130v6"/></g>
<path d="M269.0 126.0L277 135" stroke="#3a78d0" stroke-width="3.6" stroke-linecap="round"/><path d="M269.0 125.4L276.7 134.1" stroke="#a8d0f8" stroke-width="1.1" stroke-linecap="round"/><circle cx="264" cy="121" r="8" fill="#b8b8ea" stroke="#8080cc" stroke-width=".8"/><circle cx="264" cy="121" r="5.2" fill="#e4e4f8" stroke="#9c9cd8" stroke-width=".6"/><path d="M260.5 118l7 6M267.5 118l-7 6" stroke="#3434b4" stroke-width="1.6" transform="rotate(20 264 121)"/>
<path d="M299.0 126.0L307 135" stroke="#3a78d0" stroke-width="3.6" stroke-linecap="round"/><path d="M299.0 125.4L306.7 134.1" stroke="#a8d0f8" stroke-width="1.1" stroke-linecap="round"/><circle cx="294" cy="121" r="8" fill="#b8b8ea" stroke="#8080cc" stroke-width=".8"/><circle cx="294" cy="121" r="5.2" fill="#e4e4f8" stroke="#9c9cd8" stroke-width=".6"/><path d="M289.5 123.5l9-5" stroke="#3434b4" stroke-width="1.8"/>
<path d="M331.6 126.2L338.5 135" stroke="#3a78d0" stroke-width="3.6" stroke-linecap="round"/><path d="M331.6 125.6L338.2 134.1" stroke="#a8d0f8" stroke-width="1.1" stroke-linecap="round"/><circle cx="327" cy="121.5" r="7.5" fill="#b8b8ea" stroke="#8080cc" stroke-width=".8"/><circle cx="327" cy="121.5" r="4.7" fill="#fff" stroke="#9c9cd8" stroke-width=".6"/>
<path d="M316 136.500l4.300-10h1.600l4.300 10h-1.800l-1-2.600h-4.700l-1 2.600zM319.300 132.500h3.600l-1.800-4.500z" fill="#2424a4"/>
<path d="M350.5 126l8.5-9v5h6.5v8h-6.5v5z" fill="url(#gb)" stroke="#0a58b8" stroke-width=".8" stroke-linejoin="round"/>
<path d="M379 110.5l9 9h-5v5h-8v-5h-5z" fill="url(#gb)" stroke="#0a58b8" stroke-width=".8" stroke-linejoin="round"/>
<path d="M379 139.5l9-9h-5v-5h-8v5h-5z" fill="url(#gb)" stroke="#0a58b8" stroke-width=".8" stroke-linejoin="round"/>
<path d="M374 125h10" stroke="#e8f4ff" stroke-width="1"/>
<path d="M408 126.5l-8.5-8.5v4.5h-7v8h7v4.5z" fill="url(#gb)" stroke="#0a58b8" stroke-width=".8" stroke-linejoin="round"/>
<g stroke="#93a4dc" stroke-width=".8"><path d="M428.5 114.5v4.5M428.5 123.5v4.5M421.5 121h4.5M431 121h4.5M423.7 116.2l3 3M433.3 116.2l-3 3M423.7 125.8l3-3"/></g>
<path transform="translate(428.8,121.8) rotate(-20) scale(1.5)" d="M0 0l0 10.5 2.6-2.2 1.9 4.3 1.7-.8-1.9-4.2 3.4-.1z" fill="#5f9aec" stroke="#4060c4" stroke-width="0.40"/>
<g transform="translate(735,114)"><path d="M.5 11.5l11-5.5 5.2 11.3-11 5.5z" fill="#2a8ae8" stroke="#34348c" stroke-width=".8"/><path d="M3.3 11.3l7.2-3.6 4 8.8-7.2 3.6z" fill="#5cb4fa"/><path d="M3.3 11.3l7.2-3.6 1.5 3.3-7.2 3.6z" fill="#9cd4fd"/><path d="M.5 11.5l2.3-1.150 5.2 11.3-2.3 1.150zM9.2 7.150l2.3-1.150 5.2 11.3-2.3 1.150z" fill="#3c3c9c"/><circle cx="1.90" cy="12.60" r=".75" fill="#fff"/><circle cx="11.10" cy="8.00" r=".75" fill="#fff"/><circle cx="3.15" cy="15.35" r=".75" fill="#fff"/><circle cx="12.35" cy="10.75" r=".75" fill="#fff"/><circle cx="4.40" cy="18.10" r=".75" fill="#fff"/><circle cx="13.60" cy="13.50" r=".75" fill="#fff"/><circle cx="5.65" cy="20.85" r=".75" fill="#fff"/><circle cx="14.85" cy="16.25" r=".75" fill="#fff"/><path d="M10.5 0h4v3.5h3.5v4h-3.5v3.5h-4v-3.5h-3.5v-4h3.5z" fill="url(#gy)" stroke="#b88400" stroke-width=".6" transform="rotate(8 12.5 5.5)"/></g>
<g transform="translate(764,115)"><path d="M1 6.5L12.5 1l5.5 12-11.5 5.5z" fill="#a6a6a6"/><path d="M3.8 7.3l6.8-3.3 3.8 8.400-6.8 3.3z" fill="#b4b4b4"/><path d="M10 9l10 9.5M17.5 7.5l-8 11.5" stroke="#a0a0a0" stroke-width="2"/></g>
<g transform="translate(795,113)"><path d="M1.2 12.5L8.5 6.5 20.5 13.5 13.5 24z" fill="url(#gy)" stroke="#d09000" stroke-width=".6"/><path d="M1.2 9.5L8.5 3.5 20.5 10.5 13.5 21z" fill="#fff" stroke="#a8b8e0" stroke-width=".6"/><path d="M1.2 6.8L8.5 .8 20.5 7.8 13.5 18.3z" fill="#4ca8f4" stroke="#3a8ae0" stroke-width=".6"/><path d="M2.5 6.8L8.5 1.8 18.5 7.6 12.8 10z" fill="#a8dcff" opacity=".75"/></g>
<defs>
<linearGradient id="gb" x1="0" y1="0" x2="0" y2="1"><stop offset="0" stop-color="#7fd0ff"/><stop offset=".5" stop-color="#1e9cf5"/><stop offset="1" stop-color="#0a6fd0"/></linearGradient>
<linearGradient id="gb2" x1="0" y1="0" x2="1" y2="1"><stop offset="0" stop-color="#bfe4ff"/><stop offset=".45" stop-color="#2c98f0"/><stop offset="1" stop-color="#0a5cc4"/></linearGradient>
<linearGradient id="gy" x1="0" y1="0" x2="1" y2="1"><stop offset="0" stop-color="#fff6b0"/><stop offset=".5" stop-color="#ffd21e"/><stop offset="1" stop-color="#d89400"/></linearGradient>
<linearGradient id="gw" x1="0" y1="0" x2="1" y2="1"><stop offset="0" stop-color="#ffffff"/><stop offset="1" stop-color="#c8c8ee"/></linearGradient>
<linearGradient id="gg" x1="0" y1="0" x2="0" y2="1"><stop offset="0" stop-color="#c0c0c0"/><stop offset="1" stop-color="#989898"/></linearGradient>
<radialGradient id="gdot" cx=".42" cy=".32" r=".7"><stop offset="0" stop-color="#dcfcff"/><stop offset=".4" stop-color="#40c4f2"/><stop offset=".78" stop-color="#1c8cc8"/><stop offset="1" stop-color="#145488"/></radialGradient>
<linearGradient id="gcube" x1="0" y1="0" x2="1" y2="1"><stop offset="0" stop-color="#22c0ec"/><stop offset="1" stop-color="#06709c"/></linearGradient>
<radialGradient id="gdrop" cx=".4" cy=".55" r=".7"><stop offset="0" stop-color="#e8f6ff"/><stop offset=".6" stop-color="#8cc8f4"/><stop offset="1" stop-color="#4c98dc"/></radialGradient>
<filter id="blur1" x="-20%" y="-50%" width="140%" height="200%"><feGaussianBlur stdDeviation="0.95"/></filter>
</defs>
<rect x="6.5" y="151.5" width="21" height="16" fill="none" stroke="#1c1c5e" stroke-width="1.2" stroke-dasharray="2 1.6"/>
<g transform="translate(46.5,158) rotate(45)"><rect x="-5" y="-2.6" width="15" height="5.2" fill="url(#gw)" stroke="#9a9ad6" stroke-width=".8"/><path d="M10 -2.6l5 2.6-5 2.6z" fill="#eef" stroke="#9a9ad6" stroke-width=".8"/><rect x="-9.5" y="-3.6" width="5" height="7.2" rx="1" fill="url(#gy)" stroke="#b88400" stroke-width=".5"/><ellipse cx="-12.2" cy="0" rx="3.4" ry="2.9" fill="url(#gy)" stroke="#b88400" stroke-width=".5"/></g>
<g transform="translate(4,176)"><path d="M2.2 9Q1.6 5.4 7.6 2.6 13 .2 18 2.4 24 5 23.4 11 23.6 16.4 18.6 20.4 13 25 9 22.2 3.8 19 2.2 14.6 1.4 12 2.2 9z" fill="url(#gw)" stroke="#8f8fd0" stroke-width=".9"/><path d="M4 10.4L13.2 1.8 21.4 6.4 12.6 14.6z" fill="#2f96f2"/><path d="M4 10.4L13.2 1.8 17 4 7.8 12.4z" fill="#7cc6fb"/><path d="M4 10.4L12.6 14.6V22L4 16.8z" fill="#1c80e2"/><ellipse cx="19.6" cy="4.6" rx="3.4" ry="2.1" transform="rotate(28 19.6 4.6)" fill="#fff" stroke="#8f8fd0" stroke-width=".6"/><path d="M2.2 12.6v8.2a3.9 1.9 0 0 0 7.8 0v-8.2z" fill="url(#gy)" stroke="#c89000" stroke-width=".5"/><ellipse cx="6.1" cy="12.6" rx="3.9" ry="1.9" fill="#fff2a0" stroke="#d8a800" stroke-width=".5"/></g>
<path d="M29.5 197v4h-4.5z" fill="#000"/>
<g transform="translate(34,176)"><path d="M2.2 9Q1.6 5.4 7.6 2.6 13 .2 18 2.4 24 5 23.4 11 23.6 16.4 18.6 20.4 13 25 9 22.2 3.8 19 2.2 14.6 1.4 12 2.2 9z" fill="url(#gw)" stroke="#8f8fd0" stroke-width=".9"/><path d="M3.7 11L12.4 1.7 21.2 7.4 11.4 16.2z" fill="#2690f0"/><path d="M3.7 11L12.4 1.7 16.4 4.3 7 13.4z" fill="#6cbcf8"/><path d="M3.7 11L11.4 16.2V22.6L3.7 17.2z" fill="#1a7ee0"/></g>
<path d="M59.5 197v4h-4.5z" fill="#000"/>
<g transform="translate(16.2,218.6) rotate(49)"><rect x="-11.5" y="-5" width="17.5" height="10" rx="1" fill="url(#gw)" stroke="#8f8fd0" stroke-width=".8"/><rect x="-5" y="-4.6" width="10.5" height="9.2" fill="#2f8ef0"/><rect x="-5" y="-4.6" width="10.5" height="3.2" fill="#a4d6fc"/><path d="M6 -5l9 5-9 5z" fill="#fff" stroke="#8f8fd0" stroke-width=".8"/><ellipse cx="-11.5" cy="0" rx="2.2" ry="5" fill="#fff" stroke="#8f8fd0" stroke-width=".8"/></g>
<g transform="translate(46,218.5) rotate(40)"><path d="M4 -5h9.5v10.5h-9.5z" fill="#ffe254"/><path d="M8 -5h5.5v10.5h-5.5z" fill="#ffd020"/><path d="M-6 -5.2q5 -1.5 10 0v10.4q-5 1.5 -10 0z" fill="url(#gw)" stroke="#8f8fd0" stroke-width=".8"/><path d="M-15 -2.2q2.5 -2 4.5 0l1.5 .3q1.5 -3 3 -3v9.8q-1.5 0 -3 -3l-1.5 .3q-2 2 -4.5 0z" fill="url(#gy)" stroke="#b07c00" stroke-width=".5"/></g>
<path d="M59.5 227v4h-4.5z" fill="#000"/>
<g transform="translate(16,248.5) rotate(42)"><rect x="-6" y="-4.2" width="15" height="8.4" rx="1.2" fill="url(#gy)" stroke="#b8b8e0" stroke-width=".7"/><rect x="-10.5" y="-4.2" width="6.5" height="8.4" rx="2.5" fill="url(#gw)" stroke="#8f8fd0" stroke-width=".7"/><rect x="9" y="-4.2" width="2" height="8.4" rx="1" fill="#eeeefc" stroke="#a8a8d8" stroke-width=".5"/></g><path d="M4 241.5l5.5 1.2-2.6 5z" fill="#ffcf2a" stroke="#e0a000" stroke-width=".4"/>
<path d="M29.5 257v4h-4.5z" fill="#000"/>
<g transform="translate(34,236)"><ellipse cx="14" cy="13" rx="9" ry="10.5" transform="rotate(35 14 13)" fill="url(#gw)" stroke="#8f8fd0" stroke-width=".8"/><path d="M7.5 16.5q7 -3 15 -3.2q.5 5 -4 8.5q-5 3.5 -9 -.5q-2 -2.4 -2 -4.8z" fill="url(#gb)"/><ellipse cx="11.5" cy="7.5" rx="7" ry="2.6" transform="rotate(-32 11.5 7.5)" fill="#fff" stroke="#8f8fd0" stroke-width=".7"/><path d="M6.5 11.5q-5 1 -5 12q2 -3 3.5 -3.5q.5 -5 3.5 -7.5z" fill="url(#gb)"/></g>
<path d="M7.4 269.4L24.6 286.2" stroke="#1c1c5e" stroke-width="1.7" stroke-linecap="round"/>
<path d="M38.500 270.500h14.500v4.500h-2l-1-2h-2.200v11l2.200 .8v1.200h-8.500v-1.200l2.200-.8v-11h-2.200l-1 2h-2z" fill="#0a90ff" stroke="#1c1c5e" stroke-width=".9"/>
<path d="M6 308q2.2 4.2 5.2 2.6q6-4.6 9.4-6.2q3.6-1 6.2 4.8" fill="none" stroke="#1c1c5e" stroke-width="1.7" stroke-linecap="round"/>
<path d="M37.4 317.6q-3.2-7.4 2.6-13.4q5.6-5.4 15-3.8" fill="none" stroke="#1c1c5e" stroke-width="1.7" stroke-linecap="round"/>
<rect x="4.5" y="330.5" width="23" height="16" fill="#f2f2f2" stroke="#1c1c5e" stroke-width="1"/>
<rect x="34.5" y="330.5" width="23" height="16" fill="#0a94ff" stroke="#1c1c5e" stroke-width="1"/>
<ellipse cx="16" cy="368.3" rx="11.6" ry="7.2" fill="#f2f2f2" stroke="#1c1c5e" stroke-width=".9"/>
<ellipse cx="46" cy="368.3" rx="11.6" ry="7.2" fill="#0a94ff" stroke="#1c1c5e" stroke-width=".9"/>
<rect x="4.5" y="391" width="23" height="14.6" rx="5.5" fill="#f2f2f2" stroke="#1c1c5e" stroke-width=".9"/>
<rect x="34.5" y="391" width="23" height="14.6" rx="5.5" fill="#0a94ff" stroke="#1c1c5e" stroke-width=".9"/>
<path d="M9.5 426.3H54" stroke="#000" stroke-width="1.3"/>
<path d="M57.5 428v4h-4.5z" fill="#000"/>
<circle cx="8.9" cy="444.3" r="3.3" fill="url(#gdot)"/>
<circle cx="16.8" cy="444.3" r="3.3" fill="url(#gdot)"/>
<circle cx="24.8" cy="444.3" r="3.3" fill="url(#gdot)"/>
<circle cx="8.9" cy="452.1" r="3.3" fill="url(#gdot)"/>
<circle cx="16.8" cy="452.1" r="3.3" fill="url(#gdot)"/>
<circle cx="24.8" cy="452.1" r="3.3" fill="url(#gdot)"/>
<circle cx="8.9" cy="459.8" r="3.3" fill="url(#gdot)"/>
<circle cx="16.8" cy="459.8" r="3.3" fill="url(#gdot)"/>
<circle cx="24.8" cy="459.8" r="3.3" fill="url(#gdot)"/>
<circle cx="38.9" cy="444.3" r="3.3" fill="url(#gdot)"/>
<circle cx="52.8" cy="444.3" r="3.3" fill="url(#gdot)"/>
<circle cx="45.8" cy="451.6" r="3.3" fill="url(#gdot)"/>
<circle cx="38.9" cy="458.5" r="3.3" fill="url(#gdot)"/>
<circle cx="52.8" cy="458.5" r="3.3" fill="url(#gdot)"/>
<path d="M59.5 460v4h-4.5z" fill="#000"/>
<path d="M7 486L27 477.8" stroke="#0a0a0a" stroke-width="3.2" stroke-linecap="round" filter="url(#blur1)"/>
<g transform="translate(34,469)"><path d="M1 14.5L12.5 1 23.5 8.5 11.5 22z" fill="url(#gb2)" stroke="#5a5ad0" stroke-width=".7" opacity=".85"/><path d="M1 14.5L12.5 1 23.5 8.5 13 10z" fill="#b8b8f4" opacity=".8"/><path d="M1.5 14.5l10 7.5 3-3.2-7.5-6.6z" fill="#fff" opacity=".9"/><path d="M10.5 14.5l3.2-1 2.3 4 5.5-7.5 2.2 1.2-7 11h-2.2z" fill="url(#gy)" stroke="#b88400" stroke-width=".7"/></g>
<path d="M59.5 490v4h-4.5z" fill="#000"/>
<rect x="11.5" y="508" width="17.3" height="12.3" fill="#5cb4f8" stroke="#3a8ad0" stroke-width=".8"/><rect x="5.4" y="503.5" width="17.6" height="12.2" fill="#3f9a48" fill-opacity=".75" stroke="#3a8a44" stroke-width=".6"/>
<rect x="34" y="502" width="17.8" height="12.7" fill="#62a866" stroke="#4a9050" stroke-width=".6"/><rect x="40.3" y="507.3" width="17.4" height="12.3" fill="#6cbcf8" stroke="#3a78a8" stroke-width=".9"/>
<g transform="translate(4,528)"><path d="M1 7.5L11.5 1.2 21 6v11.5L10.5 24 1 18.5z" fill="url(#gb2)" stroke="#2a70d0" stroke-width=".7"/><path d="M1 7.5L11.5 1.2 21 6 10.5 12z" fill="#8ccfff" opacity=".9"/><path d="M10.5 12v12M1 7.5l9.5 4.5L21 6" fill="none" stroke="#d0ecff" stroke-width=".7"/></g>
<g transform="translate(18,541)"><path d="M2 4.5v-1.8a2.3 2.3 0 0 1 4.6 0v1.8" fill="none" stroke="#6c6cb0" stroke-width="1.3"/><rect x=".5" y="4.5" width="7.6" height="7.4" rx="1" fill="#eeeefa" stroke="#5c5ca8" stroke-width=".9"/><path d="M4.3 6.5v3.5" stroke="#303070" stroke-width="1.2"/></g>
<g transform="translate(34,529)"><path d="M10 1.5c7-1.5 12.5 3 12 9.5c-.5 6-6 10.5-12 10c-3.5-.3-3.5-3.5-6-5c-3-1.8-3.5-5.5-2-9c1.5-3.3 4.5-4.8 8-5.5z" fill="url(#gy)" stroke="#c08800" stroke-width=".6"/><ellipse cx="12" cy="5.3" rx="2.8" ry="1.5" fill="#f4f4f4"/><circle cx="5.5" cy="9.5" r="2" fill="#b8b8f0"/><circle cx="6.5" cy="15" r="2" fill="#f8f8b0"/><ellipse cx="12.5" cy="18" rx="2.8" ry="2" fill="#58b8f8"/></g>
<g transform="translate(47.5,540)"><path d="M2 4.5v-1.8a2.3 2.3 0 0 1 4.6 0v1.8" fill="none" stroke="#6c6cb0" stroke-width="1.3"/><rect x=".5" y="4.5" width="7.6" height="7.4" rx="1" fill="#eeeefa" stroke="#5c5ca8" stroke-width=".9"/><path d="M4.3 6.5v3.5" stroke="#303070" stroke-width="1.2"/></g>
<g stroke="#93a2d6" stroke-width=".9" fill="none"><path d="M13.5 560v5.5M13.5 569.5v5M6.5 567.5h5M15.5 567.5h5.5M8.8 562.8l3.3 3.3M15 569l3.3 3.3M18.3 562.8l-3.3 3.3M12 569l-3.3 3.3"/></g>
<defs><mask id="mkb" maskUnits="userSpaceOnUse" x="0" y="0" width="70" height="70"><rect width="70" height="70" fill="#fff"/><path d="M7.5 39Q12 30 21.5 26" fill="none" stroke="#000" stroke-width="1.5" stroke-linecap="round"/><path d="M29 29V48.5L20 47 18.5 40z" fill="#000"/><path d="M37.9 28.3L47.3 20.3V52H37.9z" fill="#000"/><path d="M47.3 22.4Q53.5 22.3 58.5 26.2" fill="none" stroke="#000" stroke-width="1.2"/><path d="M23.2 21l.8 2.3 2.5 .1-2 1.5 .7 2.4-2-1.4-2 1.4 .7-2.4-2-1.5 2.5-.1z" fill="#000"/></mask><mask id="mko" maskUnits="userSpaceOnUse" x="0" y="0" width="70" height="70"><rect width="70" height="70" fill="#fff"/><ellipse cx="32" cy="31.5" rx="29.3" ry="20.6" transform="rotate(-15 32 31.5)" fill="#000"/><path d="M0 0h70v28L0 50z" fill="#000"/><rect x="37.9" y="20" width="9.4" height="50" fill="#000"/></mask></defs>
<g opacity=".8"><path fill="#f29a3e" d="M6 47Q8 52.5 12.5 55 20 58.8 28.5 58.8V54.8Q19 54.2 12 50.5 8.5 48.5 7.2 46zM28.5 54.5H37.5V66.5Q33 67.3 28.5 66zM47.3 48Q54 44.5 58 38L60.4 33.5Q63 41 60 50 57.5 56.5 52 60L47.3 61.5z"/><ellipse cx="32" cy="31.5" rx="27.5" ry="18.8" transform="rotate(-15 32 31.5)" fill="#3f97d6" mask="url(#mkb)"/></g>
<path d="M29 29V48.5L20 47 18.5 40zM37.9 28.3L47.3 20.3V52H37.9z" fill="#fff" opacity=".7"/>
<text x="66" y="38.500" font-size="26.700" font-weight="bold" fill="#52a6ec" stroke="#52a6ec" stroke-width=".9" stroke-linejoin="round" opacity=".87" font-family="'Liberation Serif','Noto Serif CJK SC',serif">河东软件园</text>
</svg>
</body></html>
